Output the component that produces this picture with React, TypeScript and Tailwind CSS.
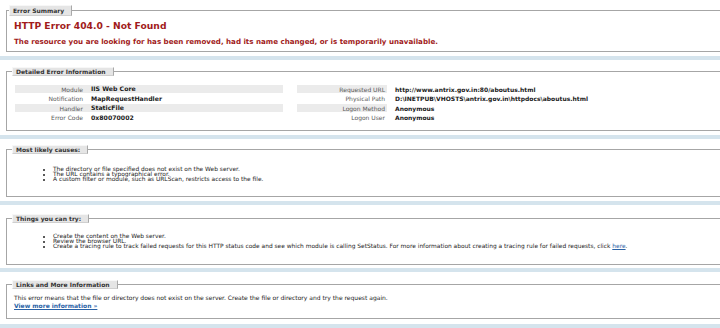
type Row = { label: string; value: string };

const leftRows: Row[] = [
  { label: "Module", value: "IIS Web Core" },
  { label: "Notification", value: "MapRequestHandler" },
  { label: "Handler", value: "StaticFile" },
  { label: "Error Code", value: "0x80070002" },
];

const rightRows: Row[] = [
  { label: "Requested URL", value: "http://www.antrix.gov.in:80/aboutus.html" },
  { label: "Physical Path", value: "D:\\INETPUB\\VHOSTS\\antrix.gov.in\\httpdocs\\aboutus.html" },
  { label: "Logon Method", value: "Anonymous" },
  { label: "Logon User", value: "Anonymous" },
];

const Legend = ({ children, className = "" }: { children: React.ReactNode; className?: string }) => (
  <legend
    className={`border border-t-[#f7f7f7] border-l-[#f7f7f7] border-r-[#a9a9a9] border-b-[#cfcfcf] bg-[#e5e5e5] pl-[3px] pr-[7px] text-[6px] font-bold leading-[6px] text-[#333] ${className}`}
  >
    {children}
  </legend>
);

const App = () => {
  return (
    <div className="h-[328px] w-[720px] overflow-hidden bg-[#d5e4ed] font-['DejaVu_Sans',Verdana,sans-serif] text-[6px] text-[#222]">
      {/* Error Summary */}
      <div className="bg-white pl-[6px] pt-[5px] pb-[4px]">
        <fieldset className="border-y border-l border-[#a6a6a6] pb-[5px] pl-[7px]">
          <Legend className="-ml-[5px] pt-[2px] pb-[1px]">Error Summary</Legend>
          <h3 className="mt-[5px] text-[9.2px] font-bold leading-[10px] text-[#a11b1b]">HTTP Error 404.0 - Not Found</h3>
          <h4 className="mt-[7px] text-[7.1px] font-bold leading-[8px] text-[#a11b1b]">
            The resource you are looking for has been removed, had its name changed, or is temporarily unavailable.
          </h4>
        </fieldset>
      </div>

      {/* Detailed Error Information */}
      <div className="mt-[4px] bg-white pl-[6px] pt-[7px] pb-[4px]">
        <fieldset className="border-y border-l border-[#a6a6a6] pb-[8.5px] pl-[8px]">
          <Legend className="-ml-[3px] py-[0.5px]">Detailed Error Information</Legend>
          <div className="mt-[9px] flex gap-[14px]">
            <div className="flex w-[268px] flex-col gap-[1.5px]">
              {leftRows.map((r, i) => (
                <div key={r.label} className={`flex h-[8px] items-center ${i % 2 === 0 ? "bg-[#ebebeb]" : ""}`}>
                  <span className="w-[72px] pr-[4px] text-right text-[#5a5a5a]">{r.label}</span>
                  <span className="pl-[4px] text-[6.2px] font-bold text-[#1a1a1a]">{r.value}</span>
                </div>
              ))}
            </div>
            <div className="flex flex-col gap-[1.5px]">
              {rightRows.map((r, i) => (
                <div key={r.label} className="flex h-[8px] items-center">
                  <span className={`flex h-full w-[90px] items-center justify-end pr-[2px] text-[#5a5a5a] ${i % 2 === 0 ? "bg-[#ebebeb]" : ""}`}>
                    {r.label}
                  </span>
                  <span className="pl-[8px] font-bold text-[#1a1a1a]">{r.value}</span>
                </div>
              ))}
            </div>
          </div>
        </fieldset>
      </div>

      {/* Most likely causes */}
      <div className="mt-[4px] bg-white pl-[6px] pt-[6px] pb-[4px]">
        <fieldset className="border-y border-l border-[#a6a6a6] pb-[14.5px] pl-[7px]">
          <Legend className="-ml-[2px] py-[0.5px]">Most likely causes:</Legend>
          <ul className="mt-[12.5px] list-disc pl-[39px] text-[5.9px] leading-[5px]">
            <li>The directory or file specified does not exist on the Web server.</li>
            <li>The URL contains a typographical error.</li>
            <li>A custom filter or module, such as URLScan, restricts access to the file.</li>
          </ul>
        </fieldset>
      </div>

      {/* Things you can try */}
      <div className="mt-[4px] bg-white pl-[6px] pt-[9px] pb-[3px]">
        <fieldset className="border-y border-l border-[#a6a6a6] pb-[15px] pl-[7px]">
          <Legend className="-ml-[2px] py-[0.5px]">Things you can try:</Legend>
          <ul className="mt-[11px] list-disc pl-[39px] text-[5.9px] leading-[5px]">
            <li>Create the content on the Web server.</li>
            <li>Review the browser URL.</li>
            <li>
              Create a tracing rule to track failed requests for this HTTP status code and see which module is calling
              SetStatus. For more information about creating a tracing rule for failed requests, click{" "}
              <a href="#" className="text-[#2a62a6] underline">here</a>.
            </li>
          </ul>
        </fieldset>
      </div>

      {/* Links and More Information */}
      <div className="mt-[4px] bg-white pl-[6px] pt-[8px] pb-[5px]">
        <fieldset className="border-y border-l border-[#a6a6a6] pb-[8px] pl-[7px]">
          <Legend className="-ml-[2px] py-[0.5px]">Links and More Information</Legend>
          <div className="mt-[5px] leading-[8px]">
            <p>
              This error means that the file or directory does not exist on the server. Create the file or directory and
              try the request again.
            </p>
            <a href="#" className="font-bold text-[#2a62a6] underline">View more information »</a>
          </div>
        </fieldset>
      </div>
    </div>
  );
};

export default App;
